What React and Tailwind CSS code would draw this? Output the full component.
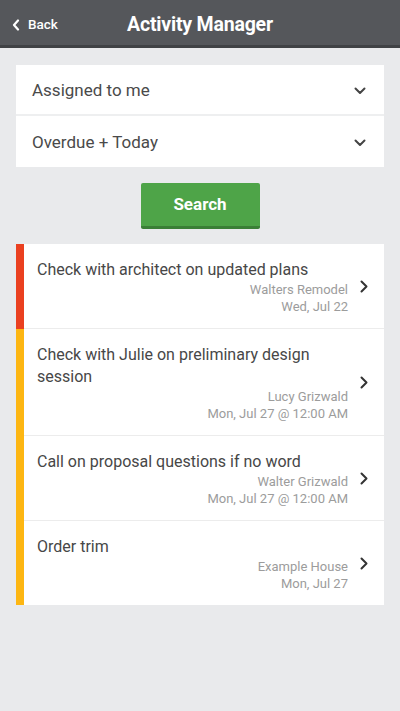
import React from "react";

const items = [
  { title: "Check with architect on updated plans", sub: "Walters Remodel", date: "Wed, Jul 22", color: "bg-[#ea4020]" },
  { title: "Check with Julie on preliminary design session", sub: "Lucy Grizwald", date: "Mon, Jul 27 @ 12:00 AM", color: "bg-[#fdb612]" },
  { title: "Call on proposal questions if no word", sub: "Walter Grizwald", date: "Mon, Jul 27 @ 12:00 AM", color: "bg-[#fdb612]" },
  { title: "Order trim", sub: "Example House", date: "Mon, Jul 27", color: "bg-[#fdb612]" },
];

function ChevronDown() {
  return (
    <svg width="12" height="8" viewBox="0 0 12 8" fill="none">
      <path d="M1.5 1.5 L6 6 L10.5 1.5" stroke="#444" strokeWidth="2" strokeLinecap="round" strokeLinejoin="round" />
    </svg>
  );
}

function ChevronRight({ color = "#333", w = 8, h = 13 }) {
  return (
    <svg width={w} height={h} viewBox="0 0 8 13" fill="none">
      <path d="M1.5 1.5 L6.5 6.5 L1.5 11.5" stroke={color} strokeWidth="2" strokeLinecap="round" strokeLinejoin="round" />
    </svg>
  );
}

export default function App() {
  return (
    <div className="w-[400px] h-[711px] bg-[#e9eaec] font-['Roboto',sans-serif] overflow-hidden">
      <div className="h-[48px] bg-[#55575b] border-b-[3px] border-[#404245] flex items-center justify-center relative pt-[4px]">
        <div className="absolute left-[12px] top-[4px] bottom-0 flex items-center gap-[8px]">
          <svg width="8" height="12" viewBox="0 0 8 12" fill="none">
            <path d="M6 1.5 L2 6 L6 10.5" stroke="#fff" strokeWidth="2.2" strokeLinecap="round" strokeLinejoin="round" />
          </svg>
          <span className="text-white text-[13.5px] font-medium">Back</span>
        </div>
        <span className="text-white text-[19.5px] font-bold tracking-[-0.2px]">Activity Manager</span>
      </div>

      <div className="px-[16px] pt-[17px]">
        <div className="bg-white">
          <div className="h-[51px] flex items-center justify-between pl-[16px] pr-[18px] pt-[2px] border-b-2 border-[#eeeff0]">
            <span className="text-[17px] text-[#4a4a4a]">Assigned to me</span>
            <ChevronDown />
          </div>
          <div className="h-[51px] flex items-center justify-between pl-[16px] pr-[18px] pt-[2px]">
            <span className="text-[17px] text-[#4a4a4a]">Overdue + Today</span>
            <ChevronDown />
          </div>
        </div>

        <div className="flex justify-center pt-[16px]">
          <button className="w-[119px] h-[46px] bg-[#4ea448] border-b-[3px] border-[#3a7f36] rounded-[2px] text-white text-[17px] font-bold">
            Search
          </button>
        </div>

        <div className="mt-[15px] bg-white">
          {items.map((it, i) => (
            <div key={i} className="flex">
              <div className={`w-[8px] ${it.color}`} />
              <div className={`flex-1 flex items-center ${i < items.length - 1 ? "border-b border-[#ececec]" : ""}`}>
                <div className="flex-1 pl-[13px] pt-[15px] pb-[13px]">
                  <div className="text-[16px] leading-[22px] text-[#474747] pr-[8px]">{it.title}</div>
                  <div className="text-right text-[13px] leading-[17px] text-[#9c9c9c]">{it.sub}</div>
                  <div className="text-right text-[13px] leading-[17px] text-[#9c9c9c]">{it.date}</div>
                </div>
                <div className="w-[36px] flex justify-center pr-[4px]">
                  <ChevronRight />
                </div>
              </div>
            </div>
          ))}
        </div>
      </div>
    </div>
  );
}
